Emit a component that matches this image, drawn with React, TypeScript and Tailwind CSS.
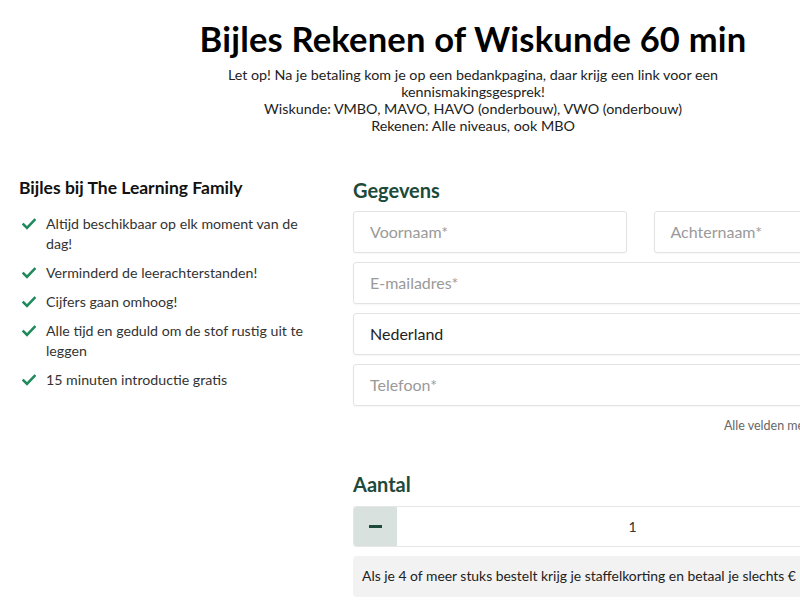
import React from "react";

const Check = () => (
  <svg width="14" height="12" viewBox="0 0 14 12" className="shrink-0 mt-[4px]">
    <path d="M1.5 6.5 L5 10 L12.5 2" fill="none" stroke="#1f8a5b" strokeWidth="2.6" strokeLinecap="square" />
  </svg>
);

const items = [
  "Altijd beschikbaar op elk moment van de dag!",
  "Verminderd de leerachterstanden!",
  "Cijfers gaan omhoog!",
  "Alle tijd en geduld om de stof rustig uit te leggen",
  "15 minuten introductie gratis",
];

const Field = ({ ph, value, className = "" }: { ph?: string; value?: string; className?: string }) => (
  <div
    className={`h-[42px] border border-[#e3e3e3] rounded-[3px] bg-white flex items-center pl-[16px] text-[16px] shadow-[0_1px_2px_rgba(0,0,0,0.04)] ${className}`}
  >
    {value ? <span className="text-[#222]">{value}</span> : <span className="text-[#9a9a9a]">{ph}</span>}
  </div>
);

export default function App() {
  return (
    <div className="w-[800px] h-[600px] overflow-hidden bg-white" style={{ fontFamily: "Lato, 'Open Sans', sans-serif" }}>
      <div className="w-[946px] px-[19px]">
        <h1 className="text-center text-[34.5px] font-bold text-black leading-[40px] pt-[19px] tracking-[0.2px]">
          Bijles Rekenen of Wiskunde 60 min
        </h1>
        <div className="text-center text-[14.3px] leading-[17px] text-[#222] mt-[7px]">
          <p>Let op! Na je betaling kom je op een bedankpagina, daar krijg een link voor een</p>
          <p>kennismakingsgesprek!</p>
          <p>Wiskunde: VMBO, MAVO, HAVO (onderbouw), VWO (onderbouw)</p>
          <p>Rekenen: Alle niveaus, ook MBO</p>
        </div>
        <div className="flex mt-[37px]">
          <div className="w-[290px] pt-[6px]">
            <h3 className="text-[17.5px] font-bold text-[#111] leading-[22px]">Bijles bij The Learning Family</h3>
            <ul className="mt-[15px] flex flex-col gap-[9px]">
              {items.map((t) => (
                <li key={t} className="flex gap-[10px] pl-[3px] text-[14.2px] leading-[20px] text-[#333]">
                  <Check />
                  <span>{t}</span>
                </li>
              ))}
            </ul>
          </div>
          <div className="ml-[44px] flex-1">
            <h2 className="text-[20px] font-bold text-[#1d4a3a] leading-[26px] pt-[6px]">Gegevens</h2>
            <div className="mt-[8px] flex flex-col gap-[9px]">
              <div className="flex gap-[27px]">
                <Field ph="Voornaam*" className="flex-1" />
                <Field ph="Achternaam*" className="flex-1" />
              </div>
              <Field ph="E-mailadres*" />
              <Field value="Nederland" />
              <Field ph="Telefoon*" />
            </div>
            <p className="text-right text-[12.5px] text-[#666] mt-[11px] pr-[14px] whitespace-nowrap">Alle velden met een * zijn verplicht</p>
            <h2 className="text-[20px] font-bold text-[#1d4a3a] leading-[26px] mt-[35px]">Aantal</h2>
            <div className="mt-[9px] flex h-[41px] border border-[#e6e6e6] rounded-[3px] overflow-hidden">
              <div className="w-[43px] bg-[#d9e1de] flex items-center justify-center">
                <div className="w-[13px] h-[2.5px] bg-[#1d4a3a]" />
              </div>
              <div className="flex-1 flex items-center justify-center text-[14px] text-[#333]">1</div>
              <div className="w-[58px] bg-[#d9e1de] flex items-center justify-center text-[#1d4a3a] font-bold">+</div>
            </div>
            <div className="mt-[9px] h-[41px] bg-[#f2f2f2] rounded-[4px] flex items-center pl-[9px] text-[13.9px] text-[#222] whitespace-nowrap">
              Als je 4 of meer stuks bestelt krijg je staffelkorting en betaal je slechts € 17,50 per stuk
            </div>
          </div>
        </div>
      </div>
    </div>
  );
}
